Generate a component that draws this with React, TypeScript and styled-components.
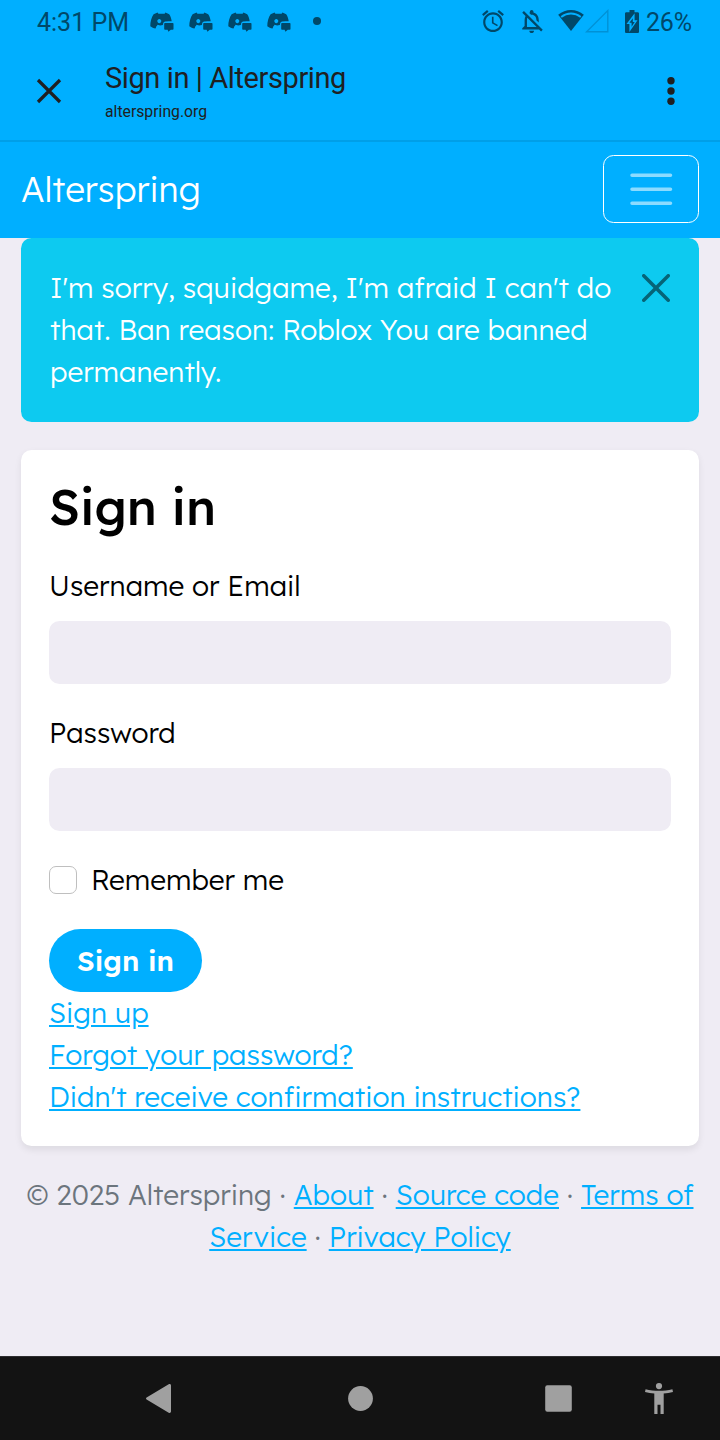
import React from "react";
import styled, { createGlobalStyle } from "styled-components";

const blue = "#00afff";
const ink = "#004869";
const haze = "#efecf4";

const GlobalStyle = createGlobalStyle`
  *, *::before, *::after { box-sizing: border-box; }
  body {
    margin: 0;
    background: ${haze};
    color: #000;
    font: 300 28px/42px Lexend, "Lexend Deca", Inter, sans-serif;
  }
  svg { display: block; flex: none; }
`;

const Screen = styled.div`
  width: 720px;
  height: 1440px;
  display: flex;
  flex-direction: column;
  overflow: hidden;
`;

/* Android status bar */
const StatusBar = styled.div`
  height: 44px;
  padding: 0 28px 0 37px;
  display: flex;
  align-items: center;
  justify-content: space-between;
  background: ${blue};
  color: ${ink};
  font: 450 25px/42px Roboto, sans-serif;
`;

const StatusGroup = styled.div`
  display: flex;
  align-items: center;
`;

const Clock = styled.span`
  width: 113px;
  padding-top: 2px;
`;

const Battery = styled.span`
  width: 46px;
  padding-top: 2px;
  letter-spacing: -0.2px;
`;

const Notifications = styled.div`
  display: flex;
  align-items: center;
  gap: 15px;
`;

const Dot = styled.i`
  width: 8px;
  height: 8px;
  margin: 0 0 2px 7px;
  border-radius: 50%;
  background: ${ink};
`;

const StatusIcon = styled.svg<{ $gap: number }>`
  margin: -2px ${(p) => p.$gap}px 0 0;
`;

/* Custom-tab toolbar */
const TabBar = styled.header`
  height: 98px;
  padding: 0 45px 2px 36px;
  display: flex;
  align-items: center;
  background: ${blue};
  border-bottom: 2px solid #009fe8;
  color: #1f2022;
  font-family: Roboto, sans-serif;
  font-weight: 370;
`;

const TabTitles = styled.div`
  flex: 1;
  margin: 1px 0 0 43px;
`;

const TabTitle = styled.div`
  font-size: 29px;
  line-height: 36px;
  letter-spacing: -0.4px;
`;

const TabHost = styled.div`
  font-size: 15.75px;
  line-height: 22px;
  margin-top: 5px;
`;

/* Site */
const Navbar = styled.nav`
  height: 96px;
  padding: 13px 21px 15px;
  display: flex;
  align-items: center;
  justify-content: space-between;
  background: ${blue};
`;

const Brand = styled.a`
  color: #fff;
  font-size: 35px;
  line-height: 52px;
`;

const Toggler = styled.button`
  width: 96px;
  height: 68px;
  padding: 0;
  display: flex;
  align-items: center;
  justify-content: center;
  background: transparent;
  border: 1px solid #fff;
  border-radius: 10.5px;
`;

const Page = styled.main`
  flex: 1;
  padding: 0 21px;
`;

const Alert = styled.div`
  height: 184px;
  padding: 29px;
  display: flex;
  align-items: flex-start;
  justify-content: space-between;
  background: #0dcaf0;
  color: #fff;
  border-radius: 10.5px;
`;

const AlertText = styled.div`
  width: 570px;
`;

const AlertClose = styled.button`
  padding: 0;
  margin-top: 7px;
  border: 0;
  background: transparent;
  opacity: 0.5;
`;

const Card = styled.form`
  margin-top: 28px;
  padding: 28px;
  background: #fff;
  border-radius: 10.5px;
  box-shadow: 0 3.5px 7px rgba(0, 0, 0, 0.075);
`;

const Heading = styled.h1`
  margin: 0 0 30px;
  font-size: 49.4px;
  line-height: 57px;
  font-weight: 500;
`;

const Field = styled.div`
  margin-bottom: 28px;
`;

const Label = styled.label`
  display: block;
  margin-bottom: 14px;
`;

const Input = styled.input`
  display: block;
  width: 100%;
  height: 63px;
  border: 0;
  border-radius: 10.5px;
  background: ${haze};
`;

const CheckRow = styled.label`
  display: flex;
  align-items: center;
  gap: 14px;
  margin-bottom: 28px;
`;

const Checkbox = styled.input`
  appearance: none;
  width: 28px;
  height: 28px;
  margin: 0;
  border: 1px solid #bfbfbf;
  border-radius: 7px;
  background: #fff;
`;

const Submit = styled.button`
  display: block;
  width: 153px;
  height: 63px;
  padding: 0;
  border: 0;
  border-radius: 32px;
  background: ${blue};
  color: #fff;
  font: 600 28px/42px Lexend, Inter, sans-serif;
`;

const LinkLine = styled.div`
  height: 42px;
`;

const Link = styled.a`
  color: ${blue};
  text-decoration: underline;
`;

const Footer = styled.footer`
  margin: 28px 0 0;
  text-align: center;
  color: #6c757d;
`;

/* Android navigation bar */
const SystemNav = styled.div`
  height: 84px;
  padding-left: 146px;
  display: flex;
  align-items: center;
  background: #131313;
  border-top: 1px solid #2d2d2f;
`;

const NavIcon = styled.svg<{ $gap: number }>`
  margin-left: ${(p) => p.$gap}px;
  fill: #a0a0a0;
`;

const DiscordIcon = () => (
  <svg width="24" height="20" viewBox="0 0 24 20">
    <path
      fill={ink}
      fillRule="evenodd"
      d="M7.600.5 3.600 2.200C1.500 5.500.2 9.500.3 14.300c1.600 1.200 3.200 1.900 5.200 2.200l1.100-1.900 1.700-.2 2 .5 3.200-.2V11.200l1.300-1.300h2.100l.5-.6h4.300C21.300 6.500 20.600 4.300 19.200 2.200L15.400.5l-.8 1.300H8.400zM9.300 6.900c-1.100 0-2 1-2 2.200s.9 2.200 2 2.200 2-1 2-2.200-.9-2.200-2-2.200z"
    />
    <path fill={blue} d="M5.800 15.600 7.600 12.800l2.600.6 2.600-.5 1-3 2.400-.7 1.400.9v1H14v5.400H7.500z" />
    <path fill={ink} d="M15 11h7.700a.8.8 0 0 1 .8.8v5.200a.8.8 0 0 1-.8.8h-1.900L18.400 19.800 17.600 17.800H15a.8.8 0 0 1-.8-.8v-5.200A.8.8 0 0 1 15 11z" />
  </svg>
);

const App = () => (
  <Screen>
    <GlobalStyle />
    <StatusBar>
      <StatusGroup>
        <Clock>4:31 PM</Clock>
        <Notifications>
          <DiscordIcon />
          <DiscordIcon />
          <DiscordIcon />
          <DiscordIcon />
          <Dot />
        </Notifications>
      </StatusGroup>
      <StatusGroup>
        <StatusIcon $gap={18} width="22" height="22" viewBox="2 1.86 20 20.14" fill={ink}>
          <path d="M22 5.720l-4.600-3.860-1.290 1.530 4.600 3.860L22 5.720zM7.880 3.390L6.600 1.860 2 5.710l1.290 1.530 4.590-3.850zM12.500 8H11v6l4.750 2.850.75-1.230-4-2.370V8zM12 4c-4.970 0-9 4.030-9 9s4.020 9 9 9c4.970 0 9-4.030 9-9s-4.030-9-9-9zm0 16c-3.870 0-7-3.130-7-7s3.130-7 7-7 7 3.130 7 7-3.130 7-7 7z" />
        </StatusIcon>
        <StatusIcon $gap={15} width="21" height="23" viewBox="4 2.5 17.4 19.5" fill={ink}>
          <path d="M12 22c1.100 0 2-.9 2-2h-4c0 1.100.9 2 2 2zm0-15.500c2.490 0 4 2.020 4 4.500v.1l2 2V11c0-3.070-1.630-5.640-4.500-6.320V4c0-.83-.67-1.500-1.500-1.500s-1.500.67-1.500 1.500v.68c-.24.06-.47.15-.69.23l1.640 1.640c.18-.02.36-.05.55-.05zM5.410 3.350L4 4.760l2.810 2.810C6.290 8.570 6 9.740 6 11v5l-2 2v1h14.240l1.740 1.740 1.410-1.410L5.410 3.350zM16 17H8v-6c0-.68.12-1.320.34-1.900L16 16.760V17z" />
        </StatusIcon>
        <StatusIcon $gap={16} width="51" height="24" viewBox="0 0 51 24">
          <path fill={ink} d="M13 22 .2 5.800C7.500-.7 18.500-.7 25.800 5.800z" />
          <path fill="none" stroke={blue} strokeWidth="1.900" d="M3.200 7.900c6-4.500 13.600-4.500 19.600 0" />
          <path fill="none" stroke="#0091d6" strokeWidth="1.400" d="M28.600 22.800H49.800V1.600z" />
        </StatusIcon>
        <StatusIcon $gap={7} width="14" height="23" viewBox="0 0 14 23">
          <path fill={ink} d="M4.500 0h5v2.300h3.200c.7 0 1.300.6 1.300 1.300v18.100c0 .7-.6 1.300-1.300 1.300H1.300C.6 23 0 22.400 0 21.700V3.600c0-.7.6-1.300 1.300-1.300h3.200z" />
          <path fill={blue} d="M9.600 3.200 1.500 14H4.400V21.900L12.500 10.300H9.600z" />
          <path fill={ink} d="M7.800 8.200 4.400 12.700H6.600V16.800L9.700 12H7.800z" />
        </StatusIcon>
        <Battery>26%</Battery>
      </StatusGroup>
    </StatusBar>

    <TabBar>
      <svg width="26" height="26" viewBox="0 0 26 26" stroke="#1f2022" strokeWidth="3.2">
        <path d="M2 2l22 22M24 2 2 24" />
      </svg>
      <TabTitles>
        <TabTitle>Sign in | Alterspring</TabTitle>
        <TabHost>alterspring.org</TabHost>
      </TabTitles>
      <svg width="8" height="28" viewBox="0 0 8 28" fill="#1f2022">
        <circle cx="4" cy="3.700" r="3.700" />
        <circle cx="4" cy="14" r="3.700" />
        <circle cx="4" cy="24.300" r="3.700" />
      </svg>
    </TabBar>

    <Navbar>
      <Brand>Alterspring</Brand>
      <Toggler type="button" aria-label="Toggle navigation">
        <svg width="52.5" height="52.5" viewBox="0 0 30 30">
          <path
            fill="none"
            stroke="rgba(255,255,255,.55)"
            strokeLinecap="round"
            strokeMiterlimit="10"
            strokeWidth="2"
            d="M4 7h22M4 15h22M4 23h22"
          />
        </svg>
      </Toggler>
    </Navbar>

    <Page>
      <Alert>
        <AlertText>
          I'm sorry, squidgame, I'm afraid I can't do that. Ban reason: Roblox You are banned permanently.
        </AlertText>
        <AlertClose type="button" aria-label="Close">
          <svg width="28" height="28" viewBox="0 0 16 16">
            <path d="M.293.293a1 1 0 0 1 1.414 0L8 6.586 14.293.293a1 1 0 1 1 1.414 1.414L9.414 8l6.293 6.293a1 1 0 0 1-1.414 1.414L8 9.414l-6.293 6.293a1 1 0 0 1-1.414-1.414L6.586 8 .293 1.707a1 1 0 0 1 0-1.414z" />
          </svg>
        </AlertClose>
      </Alert>

      <Card>
        <Heading>Sign in</Heading>
        <Field>
          <Label htmlFor="login">Username or Email</Label>
          <Input id="login" />
        </Field>
        <Field>
          <Label htmlFor="password">Password</Label>
          <Input id="password" type="password" />
        </Field>
        <CheckRow>
          <Checkbox type="checkbox" />
          Remember me
        </CheckRow>
        <Submit type="button">Sign in</Submit>
        <LinkLine><Link>Sign up</Link></LinkLine>
        <LinkLine><Link>Forgot your password?</Link></LinkLine>
        <LinkLine><Link>Didn't receive confirmation instructions?</Link></LinkLine>
      </Card>

      <Footer>
        © 2025 Alterspring · <Link>About</Link> · <Link>Source code</Link> · <Link>Terms of Service</Link> ·{" "}
        <Link>Privacy Policy</Link>
      </Footer>
    </Page>

    <SystemNav>
      <NavIcon $gap={0} width="25" height="29" viewBox="0 0 25 29">
        <path d="M.6 13.400 22.700.3C23.800-.3 25 .3 25 1.500v26c0 1.200-1.200 1.800-2.300 1.200L.6 15.600c-.8-.5-.8-1.700 0-2.200z" />
      </NavIcon>
      <NavIcon $gap={177} width="25" height="25" viewBox="0 0 25 25">
        <circle cx="12.500" cy="12.500" r="12.400" />
      </NavIcon>
      <NavIcon $gap={172} width="27" height="27" viewBox="0 0 27 27">
        <rect x=".2" y=".2" width="26.600" height="26.600" rx="2.200" />
      </NavIcon>
      <NavIcon $gap={72.5} width="28" height="31" viewBox="0 0 28 31">
        <circle cx="14" cy="3.100" r="3.100" />
        <path d="M.6 6.200C9 8.300 19 8.300 27.400 6.200L28 9c-3 .8-6.200 1.300-9.300 1.600V31h-3.200v-9.300h-3V31H9.300V10.600C6.200 10.300 3 9.800 0 9z" />
      </NavIcon>
    </SystemNav>
  </Screen>
);

export default App;
